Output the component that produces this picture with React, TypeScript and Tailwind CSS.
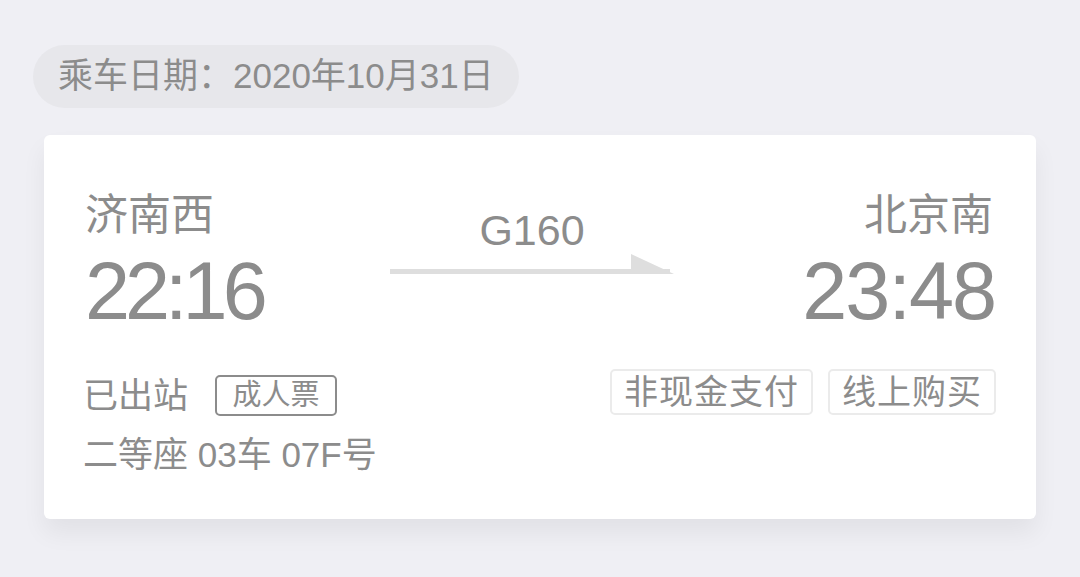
const FONT = { fontFamily: '"Liberation Sans", "Noto Sans CJK SC", sans-serif' }

// Small outlined tag next to the ticket info
function Tag({ children, strong }: { children: React.ReactNode; strong?: boolean }) {
    return (
        <span
            className={
                strong
                    ? 'inline-flex items-center justify-center h-[41px] w-[122px] rounded-[5px] border-2 border-[#8c8c8c] text-[29px] leading-none'
                    : 'inline-flex items-center justify-center h-[46px] px-[12px] rounded-[5px] border-2 border-[#ebebeb] text-[34px] leading-none tracking-[1px]'
            }
        >
            {children}
        </span>
    )
}

// Train arrow between the stations
function Arrow() {
    return (
        <svg width="284" height="21" viewBox="0 0 284 21">
            <rect x="0" y="15" width="280" height="5" fill="#dedede" />
            <polygon points="241,0 284,20 241,20" fill="#dedede" />
        </svg>
    )
}

export default function App() {
    return (
        <div className="min-h-[577px] w-[1080px] bg-[#efeff4] text-[#8c8c8c] pt-[45px]" style={FONT}>
            {/* Date pill */}
            <div className="ml-[33px] inline-flex items-center h-[63px] px-[25px] rounded-full bg-[#e7e7eb] text-[35px]">
                乘车日期：2020年10月31日
            </div>

            {/* Ticket card */}
            <div className="mt-[27px] mx-[44px] h-[384px] bg-white rounded-[6px] shadow-[0_14px_24px_rgba(0,0,0,0.06)] pl-[41px] pr-[43px] pt-[56px]">
                <div className="grid grid-cols-[1fr_auto_1fr]">
                    <div className="flex flex-col">
                        <div className="text-[43px] leading-[48px]">济南西</div>
                        <div className="text-[81px] leading-none mt-[12px] tracking-[-5px]">22:16</div>
                    </div>
                    <div className="flex flex-col items-center mr-[14px] pt-[18px]">
                        <div className="text-[43px] leading-none">G160</div>
                        <div className="mt-[2px]">
                            <Arrow />
                        </div>
                    </div>
                    <div className="flex flex-col items-end">
                        <div className="text-[43px] leading-[48px]">北京南</div>
                        <div className="text-[81px] leading-none mt-[12px] tracking-[-2px] -mr-[2px]">23:48</div>
                    </div>
                </div>

                <div className="flex justify-between items-start mt-[43px]">
                    <div className="flex flex-col -ml-[2px]">
                        <div className="flex items-center gap-[27px]">
                            <span className="text-[35px] leading-none">已出站</span>
                            <Tag strong>成人票</Tag>
                        </div>
                        <div className="text-[35px] leading-none mt-[21px]">二等座 03车 07F号</div>
                    </div>
                    <div className="flex gap-[15px] -mt-[6px] -mr-[3px]">
                        <Tag>非现金支付</Tag>
                        <Tag>线上购买</Tag>
                    </div>
                </div>
            </div>
        </div>
    )
}
